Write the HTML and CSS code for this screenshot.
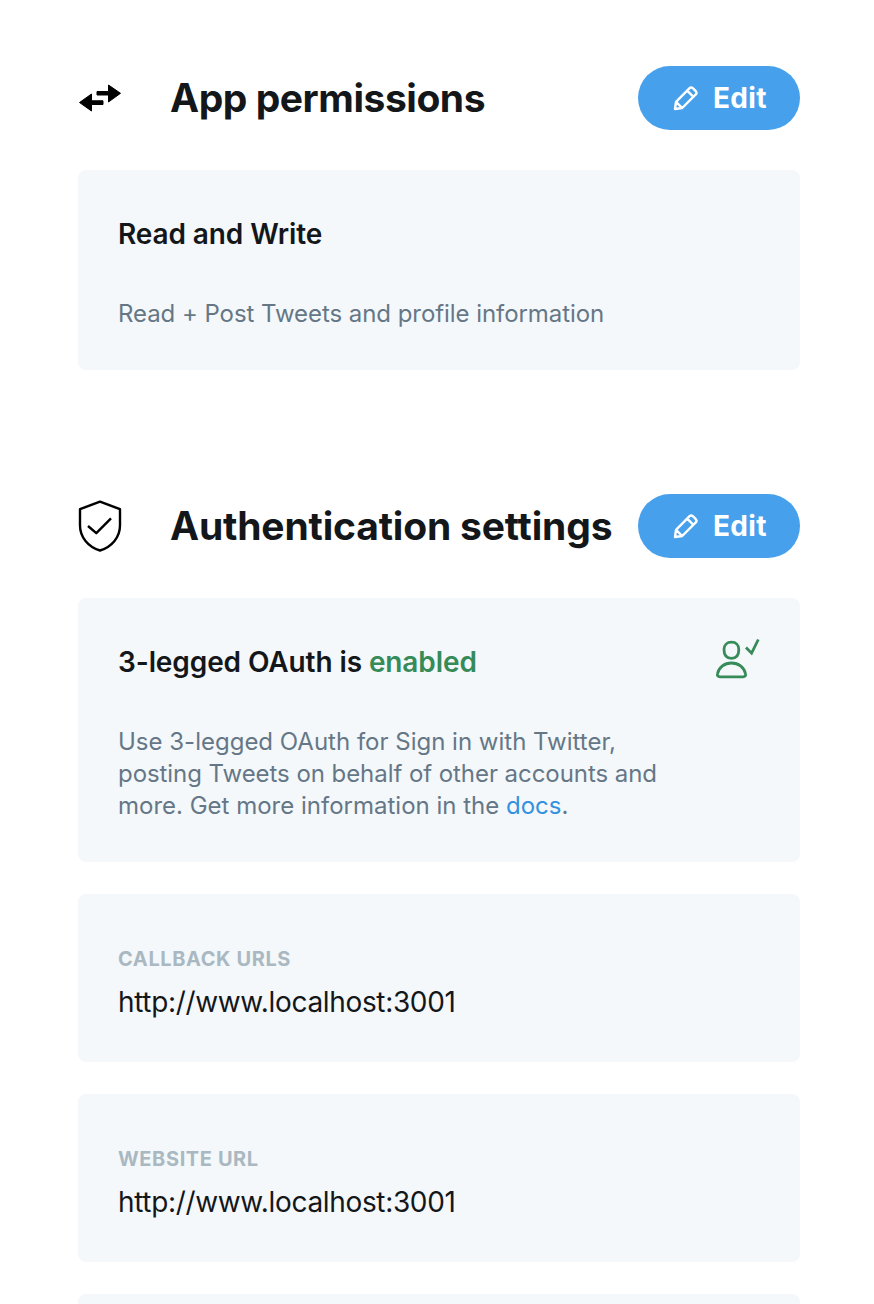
FILE: index.html
```html
<!DOCTYPE html>
<html lang="en">
<head>
<meta charset="utf-8">
<title>App settings</title>
<link rel="stylesheet" href="styles.css">
</head>
<body>
<svg class="symbols" aria-hidden="true">
  <symbol id="pencil" viewBox="0 0 28 28">
    <path d="M3 25 4 17.8 17.6 4.2Q19.2 2.7 20.8 4.2L23.8 7.2Q25.3 8.8 23.8 10.4L10.2 24ZM15.2 6.6 21.4 12.8M4 17.8 10.2 24"/>
  </symbol>
</svg>
<main class="page">
  <section class="section">
    <header class="section-header">
      <svg class="section-icon arrows" viewBox="0 0 44 56">
        <path d="M19 21.500H30.500V15L42.500 23.300 30.500 32V25H19ZM25 34.500H13.500V41L1.500 32.500 13.500 24V30.800H25Z"/>
      </svg>
      <h2 class="title title-app">App permissions</h2>
      <button class="edit"><svg class="pencil"><use href="#pencil"/></svg><span>Edit</span></button>
    </header>
    <article class="card">
      <h3 class="card-title">Read and Write</h3>
      <p class="description"><span class="tight">Read + Post Tweets and profile information</span></p>
    </article>
  </section>
  <section class="section">
    <header class="section-header">
      <svg class="section-icon outline" viewBox="0 0 44 56">
        <path d="M22 3.700 42 11.200V27.500C42 39 34 48.800 22 52.500 10 48.800 2 39 2 27.500V11.200ZM10 28 18.300 35.200 33 20.400"/>
      </svg>
      <h2 class="title title-auth">Authentication settings</h2>
      <button class="edit"><svg class="pencil"><use href="#pencil"/></svg><span>Edit</span></button>
    </header>
    <article class="card card-oauth">
      <div>
        <h3 class="card-title">3-legged OAuth is <span class="enabled">enabled</span></h3>
        <p class="description">Use 3-legged OAuth for Sign in with Twitter,<br><span class="tight">posting Tweets on behalf of other accounts and</span><br>more. Get more information in the <a href="#">docs</a>.</p>
      </div>
      <svg class="user-check" viewBox="0 0 46 42">
        <path d="M17.500 4.200C22 4.200 24.800 7 24.800 11.500 24.800 17.500 22.800 20.300 17.500 20.300S10 17.500 10 11.500C10 7 13 4.200 17.500 4.200ZM6 38.800C3.900 38.800 3 37.600 3.500 35.800 5 29.300 10.500 25 17.500 25S30 29.300 31.500 35.800C32 37.600 31.100 38.800 29 38.800ZM32 9.500 37.600 15.200 44.300 1.500"/>
      </svg>
    </article>
    <article class="card card-url">
      <h4 class="label">CALLBACK URLS</h4>
      <p class="value">http://www.localhost:3001</p>
    </article>
    <article class="card card-url">
      <h4 class="label">WEBSITE URL</h4>
      <p class="value">http://www.localhost:3001</p>
    </article>
    <article class="card card-peek"></article>
  </section>
</main>
</body>
</html>
```
FILE: styles.css
```css
* { box-sizing: border-box; }
body {
  margin: 0;
  background: #fff;
  color: #14171a;
  font-family: Inter, "Liberation Sans", sans-serif;
}
h2, h3, h4, p { margin: 0; white-space: nowrap; }
.symbols { display: none; }
.page {
  width: 722px;
  margin-left: 78px;
  padding-top: 66px;
  display: flex;
  flex-direction: column;
  gap: 124px;
}
.section { display: flex; flex-direction: column; }
.section-header {
  display: flex;
  align-items: center;
  height: 64px;
  margin-bottom: 40px;
}
.section-icon { width: 44px; height: 56px; margin-right: 48px; flex: none; }
.arrows { fill: #000; stroke: #000; stroke-width: 1; stroke-linejoin: round; }
.outline { fill: none; stroke: #000; stroke-width: 2.4; stroke-linejoin: round; }
.title {
  flex: 1;
  min-width: 0;
  padding-bottom: 1px;
  font-size: 39px;
  line-height: 51px;
  font-weight: 700;
}
.title-app { letter-spacing: -0.46px; }
.title-auth { letter-spacing: -0.17px; }
.edit {
  display: flex;
  align-items: center;
  flex: none;
  width: 162px;
  height: 64px;
  padding: 0 0 0 34px;
  border: 0;
  border-radius: 32px;
  background: #47a0ec;
  color: #fff;
  font: 700 28px/36px Inter, "Liberation Sans", sans-serif;
  letter-spacing: 0.35px;
}
.pencil {
  width: 28px;
  height: 28px;
  margin: 0 13px 1px 0;
  fill: none;
  stroke: #fff;
  stroke-width: 2.4;
  stroke-linejoin: round;
}
.card {
  height: 200px;
  padding: 46px 40px 0;
  border-radius: 8px;
  background: #f4f8fb;
}
.card-title { font-size: 28px; line-height: 36px; font-weight: 600; letter-spacing: -0.1px; }
.enabled { color: #368b58; }
.description {
  margin-top: 46px;
  color: #657786;
  font-size: 24px;
  line-height: 32px;
}
.tight { letter-spacing: -0.06px; }
.description a { color: #3391e0; text-decoration: none; }
.card-oauth { display: flex; justify-content: space-between; height: 264px; }
.user-check {
  width: 46px;
  height: 42px;
  margin-top: -6px;
  fill: none;
  stroke: #368b58;
  stroke-width: 2.8;
}
.card-url { height: 168px; margin-top: 32px; padding-top: 52px; }
.card-peek { height: 10px; margin-top: 32px; padding: 0; border-radius: 8px 8px 0 0; }
.label {
  color: #aab8c2;
  font-size: 20px;
  line-height: 26px;
  font-weight: 700;
  letter-spacing: 0.6px;
}
.value { margin-top: 12px; font-size: 28px; line-height: 36px; letter-spacing: -0.34px; }
```
